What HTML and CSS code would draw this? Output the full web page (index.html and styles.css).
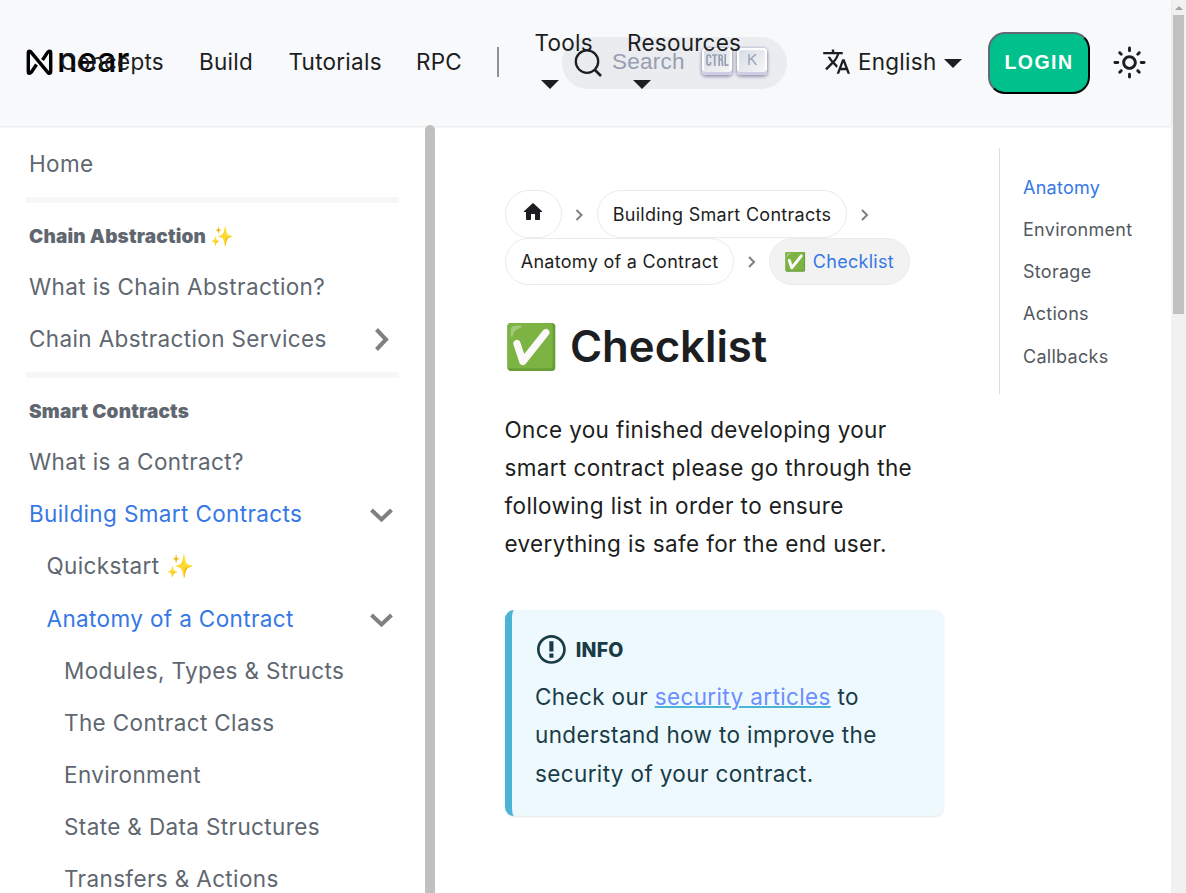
FILE: index.html
```html
<!DOCTYPE html>
<html lang="en">
<head>
<meta charset="utf-8">
<title>Checklist</title>
<link rel="stylesheet" href="styles.css">
</head>
<body>
<div class="page">
  <header class="navbar">
    <div class="logo">
      <svg width="27" height="27" viewBox="0 0 27 27"><path d="M10.500 15.500L5.300 23.200Q4.500 24.300 3.300 24.300Q2.300 24.300 2.300 23V4Q2.300 2.300 3.700 2.300Q4.500 2.300 5.200 3.300L21.800 23.400Q22.500 24.300 23.300 24.300Q24.700 24.300 24.700 22.600V4Q24.700 2.300 23.500 2.300Q22.400 2.300 21.600 3.400L16.500 11" fill="none" stroke="#000" stroke-width="3.400" stroke-linejoin="round"/></svg>
      <span class="logo-text">near</span>
    </div>
    <nav class="nav-left">
      <a class="n-concepts">Concepts</a><a class="n-build">Build</a><a class="n-tutorials">Tutorials</a><a class="n-rpc">RPC</a><i class="nav-sep"></i>
      <a class="drop n-tools">Tools<b class="caret"></b></a><a class="drop n-resources">Resources<b class="caret"></b></a>
    </nav>
    <div class="search">
      <svg class="search-icon" width="30" height="30" viewBox="0 0 30 30" fill="none" stroke="#1c1e21" stroke-width="2.300"><circle cx="13" cy="13.600" r="11.200"/><path d="M20.500 21.500l6.500 6.500" stroke-width="2.600"/></svg>
      <span class="search-label">Search</span>
      <kbd><svg width="23" height="12" viewBox="0 0 23 12" fill="none" stroke="#98a0b3" stroke-width="1.700"><path d="M4.600 4V3Q4.600 1 2.800 1T1 3v6q0 2 1.800 2t1.800-2V8M6 1h5.400M8.700 1v11M13.200 12V1h1.300q1.800 0 1.800 2.300t-1.800 2.400h-1.300M14.800 5.700q1.600 0 1.600 2.300v4M19.200 0v11.100H22.500"/></svg></kbd>
      <kbd><svg width="9" height="11" viewBox="0 0 9 11" fill="none" stroke="#98a0b3" stroke-width="1.400"><path d="M1 0v11M8 0L1 6.500M3.300 4.300L8.300 11"/></svg></kbd>
    </div>
    <div class="nav-right">
      <svg class="lang-icon" width="29.300" height="29.300" viewBox="0 0 24 24"><path fill="#1c1e21" d="M12.870 15.070l-2.540-2.510.030-.030c1.740-1.940 2.980-4.170 3.710-6.530H17V4h-7V2H8v2H1v1.990h11.170C11.500 7.920 10.440 9.750 9 11.350 8.070 10.320 7.300 9.190 6.690 8h-2c.730 1.630 1.730 3.170 2.980 4.560l-5.090 5.020L4 19l5-5 3.110 3.110.760-2.040zM18.500 10h-2L12 22h2l1.120-3h4.750L21 22h2l-4.500-12zm-2.620 7l1.620-4.330L19.120 17h-3.240z"/></svg>
      <span class="lang">English</span><b class="caret"></b>
      <button class="login">LOGIN</button>
      <svg class="sun" width="35" height="35" viewBox="0 0 24 24"><path fill="#1c1e21" d="M12,9c1.650,0,3,1.350,3,3s-1.350,3-3,3s-3-1.350-3-3S10.350,9,12,9 M12,7c-2.760,0-5,2.240-5,5s2.240,5,5,5s5-2.240,5-5 S14.760,7,12,7L12,7z M2,13l2,0c0.550,0,1-0.450,1-1s-0.450-1-1-1l-2,0c-0.550,0-1,0.450-1,1S1.450,13,2,13z M20,13l2,0c0.550,0,1-0.450,1-1 s-0.450-1-1-1l-2,0c-0.550,0-1,0.450-1,1S19.450,13,20,13z M11,2v2c0,0.550,0.450,1,1,1s1-0.450,1-1V2c0-0.550-0.450-1-1-1S11,1.450,11,2z M11,20v2c0,0.550,0.450,1,1,1s1-0.450,1-1v-2c0-0.550-0.450-1-1-1C11.450,19,11,19.450,11,20z M5.990,4.580c-0.390-0.390-1.030-0.390-1.410,0 c-0.390,0.390-0.390,1.030,0,1.410l1.060,1.060c0.390,0.390,1.030,0.390,1.410,0s0.390-1.030,0-1.410L5.990,4.580z M18.360,16.950 c-0.390-0.390-1.030-0.390-1.410,0c-0.390,0.390-0.390,1.030,0,1.410l1.060,1.060c0.390,0.390,1.030,0.390,1.410,0c0.390-0.390,0.390-1.030,0-1.410 L18.360,16.950z M19.420,5.990c0.390-0.390,0.390-1.030,0-1.410c-0.390-0.390-1.030-0.390-1.410,0l-1.060,1.060c-0.390,0.390-0.390,1.030,0,1.410 s1.030,0.390,1.410,0L19.420,5.990z M7.050,18.360c0.390-0.390,0.390-1.030,0-1.410c-0.390-0.390-1.030-0.390-1.410,0l-1.060,1.060 c-0.390,0.390-0.390,1.030,0,1.410s1.030,0.390,1.410,0L7.050,18.360z"/></svg>
    </div>
  </header>
  <div class="body">
    <aside class="sidebar">
      <a class="item">Home</a>
      <hr>
      <h4>Chain Abstraction ✨</h4>
      <a class="item">What is Chain Abstraction?</a>
      <a class="item">Chain Abstraction Services<svg class="chev" width="24" height="24" viewBox="0 0 24 24"><path d="M6.500 2.500L16 12.500L6.500 22.500" fill="none" stroke="#808080" stroke-width="4"/></svg></a>
      <hr>
      <h4>Smart Contracts</h4>
      <a class="item">What is a Contract?</a>
      <a class="item active">Building Smart Contracts<svg class="chev" width="24" height="24" viewBox="0 0 24 24"><path d="M1.500 8L11.500 17.500L21.500 8" fill="none" stroke="#808080" stroke-width="4"/></svg></a>
      <a class="item l2">Quickstart ✨</a>
      <a class="item l2 active">Anatomy of a Contract<svg class="chev" width="24" height="24" viewBox="0 0 24 24"><path d="M1.500 8L11.500 17.500L21.500 8" fill="none" stroke="#808080" stroke-width="4"/></svg></a>
      <a class="item l3">Modules, Types &amp; Structs</a>
      <a class="item l3">The Contract Class</a>
      <a class="item l3">Environment</a>
      <a class="item l3">State &amp; Data Structures</a>
      <a class="item l3">Transfers &amp; Actions</a>
    </aside>
    <div class="side-scroll"></div>
    <main class="content">
      <nav class="crumbs">
        <div class="crumb-row">
          <a class="crumb home"><svg width="24" height="24" viewBox="0 0 24 24"><path d="M10 19v-5h4v5c0 .550.450 1 1 1h3c.550 0 1-.450 1-1v-7h1.700c.460 0 .680-.570.330-.870L12.670 3.600c-.380-.340-.960-.340-1.340 0l-8.360 7.530c-.340.300-.130.870.330.870H5v7c0 .550.450 1 1 1h3c.550 0 1-.450 1-1z" fill="#1c1e21"/></svg></a>
          <svg class="sep" width="10" height="14" viewBox="0 0 10 14"><path d="M2.500 2l5 5-5 5" fill="none" stroke="#808080" stroke-width="2"/></svg>
          <a class="crumb c1">Building Smart Contracts</a>
          <svg class="sep" width="10" height="14" viewBox="0 0 10 14"><path d="M3 2l5 5-5 5" fill="none" stroke="#808080" stroke-width="2"/></svg>
        </div>
        <div class="crumb-row second">
          <a class="crumb c2">Anatomy of a Contract</a>
          <svg class="sep" width="10" height="14" viewBox="0 0 10 14"><path d="M3 2l5 5-5 5" fill="none" stroke="#808080" stroke-width="2"/></svg>
          <a class="crumb current">✅ Checklist</a>
        </div>
      </nav>
      <h1>✅ Checklist</h1>
      <p class="lead">Once you finished developing your<br>smart contract please go through the<br>following list in order to ensure<br>everything is safe for the end user.</p>
      <section class="info">
        <div class="info-head"><svg width="28.800" height="32.900" viewBox="0 0 14 16"><path fill="#193c47" fill-rule="evenodd" d="M7 2.300c3.140 0 5.700 2.560 5.700 5.700s-2.560 5.700-5.700 5.700A5.710 5.710 0 0 1 1.300 8c0-3.140 2.560-5.700 5.700-5.700zM7 1C3.140 1 0 4.140 0 8s3.140 7 7 7 7-3.140 7-7-3.140-7-7-7zm1 3H6v5h2V4zm0 6H6v2h2v-2z"/></svg><span class="info-title">INFO</span></div>
        <p>Check our <a>security articles</a> to<br>understand how to improve the<br>security of your contract.</p>
      </section>
    </main>
    <nav class="toc">
      <a class="active">Anatomy</a><a>Environment</a><a>Storage</a><a>Actions</a><a>Callbacks</a>
    </nav>
  </div>
</div>
<div class="scrollbar"><i class="arrow"></i><i class="thumb"></i></div>
</body>
</html>
```
FILE: styles.css
```css
* { box-sizing: border-box; }
body {
  margin: 0; display: flex; width: 1186px; height: 893px; overflow: hidden;
  background: #fff; color: #1c1e21;
  font: 380 22.500px/38.200px Inter, "Noto Color Emoji", sans-serif;
  letter-spacing: .37px;
}
.page { width: 1171px; height: 893px; display: flex; flex-direction: column; }
.navbar {
  position: relative; z-index: 1; flex: none; height: 126px; background: #f8f9fb; letter-spacing: .25px;
  box-shadow: 0 1px 2px rgba(0,0,0,.1); display: flex; align-items: center; justify-content: space-between;
}
.logo { position: absolute; left: 26px; top: 49px; display: flex; }
.logo-text { font: 540 34px/27px Inter, sans-serif; color: #000; margin: -3px 0 0 4px; letter-spacing: -.3px; }
.nav-left { position: relative; z-index: 2; display: flex; align-items: center; padding-left: 60px; height: 126px; margin-top: -2px; white-space: nowrap; }
.n-concepts { width: 139px; }
.n-build { width: 89.500px; }
.n-tutorials { width: 127.500px; }
.n-rpc { width: 81px; }
.nav-sep { width: 2px; height: 30px; background: #8f9093; margin-right: 35.500px; }
.drop { display: flex; flex-direction: column; margin-top: -11px; }
.n-tools { width: 92.500px; }
.caret { width: 0; height: 0; border: solid transparent; border-width: 9px 9px 0; border-top-color: #1c1e21; }
.drop .caret { margin: 17px 0 0 6px; }
.search {
  position: absolute; left: 562px; top: 37px; width: 225px; height: 52px; border-radius: 26px;
  background: #ebecf0; display: flex; align-items: center; padding-left: 12px;
}
.search-label { color: #969faf; font: 22.500px/30px "Liberation Sans", sans-serif; margin: -2px 17px 0 8px; width: 73px; }
kbd {
  width: 30px; height: 27px; margin: -4px 5px 0 0; border-radius: 4px; flex: none;
  display: flex; align-items: center; justify-content: center; padding-bottom: 3px;
  background: linear-gradient(-225deg, #d5dbe4, #f8f8f8);
  box-shadow: inset 0 -3px 0 0 #cdcde6, inset 0 0 1px 2px #fff, 0 1px 3px 1px rgba(30,35,90,.4);
}
.nav-right { display: flex; align-items: center; }
.lang-icon { margin: -2px 7px 0 0; }
.lang { width: 86px; margin-top: -2px; white-space: nowrap; }
.login {
  width: 102px; height: 62px; margin: 0 22px 0 26px; padding: 0 0 2px; border: 2px outset #1c1e21; border-radius: 17px;
  background: #00c08b; color: #fff; font: bold 19.500px "Liberation Sans", sans-serif; letter-spacing: 1.500px;
}
.sun { margin: -2px 24px 0 0; }
.body { display: flex; flex: 1; min-height: 0; }
.sidebar { width: 425px; padding: 12px 26px 0; color: #606770; overflow: hidden; }
.item { display: flex; align-items: center; justify-content: space-between; height: 52.100px; padding: 0 5px 0 3px; white-space: nowrap; }
.l2 { padding-left: 20.500px; }
.l3 { padding-left: 38px; }
.active { color: #3578e5; }
.sidebar hr { height: 6px; margin: 7px 0 8px; border: 0; background: #f7f7f8; }
.sidebar h4 { margin: 0; padding-left: 3px; height: 50px; font-size: 19px; line-height: 51px; font-weight: 900; letter-spacing: .2px; white-space: nowrap; }
.side-scroll { width: 10px; margin-top: -1px; position: relative; z-index: 2; background: #c0c0c0; border-radius: 5px 5px 0 0; }
.content { width: 509px; padding: 64px 0 0 70px; }
.crumb-row { display: flex; align-items: center; height: 47.500px; letter-spacing: .3px; }
.crumb { height: 47.500px; border: 1px solid #ebebeb; border-radius: 24px; font-size: 18px; line-height: 47.500px; padding-left: 14.700px; white-space: nowrap; }
.second .crumb { line-height: 46px; }
.home { width: 57px; display: flex; align-items: center; padding-bottom: 3px; }
.c1 { width: 250px; }
.c2 { width: 229px; }
.current { width: 141px; background: #f2f2f2; color: #3578e5; }
.sep { margin: 2px 13px 0 12px; }
h1 { margin: 28px 0 0 -.5px; font-size: 43.700px; line-height: 68px; font-weight: 600; letter-spacing: 0; white-space: nowrap; }
p { margin: 0; white-space: nowrap; }
.lead { margin: 30px 0 0 -.5px; line-height: 38.100px; }
.info {
  width: 439px; height: 206px; margin-top: 47px; padding: 22px 0 0 23px; color: #193c47; background: #eef9fd;
  border-left: 7px solid #4cb3d4; border-radius: 9px; box-shadow: 0 1px 2px rgba(0,0,0,.1);
}
.info-head { display: flex; align-items: center; gap: 10px; height: 34px; margin: 0 0 12px 2px; font-size: 19.500px; font-weight: 800; letter-spacing: .2px; }
.info-title { margin-top: 2px; }
.info p { line-height: 38.100px; }
.info a { color: #6c8eff; text-decoration: underline; text-decoration-color: #4cb3d4; text-decoration-thickness: 2px; }
.toc { width: 140px; height: 246px; margin: 22px 0 0 55px; padding: 19px 0 0 23px; border-left: 1px solid #dadde1; display: flex; flex-direction: column; font-size: 18px; letter-spacing: .28px; color: #525860; }
.toc a { height: 42.150px; line-height: 42px; }
.scrollbar { width: 15px; height: 893px; background: #f1f1f1; display: flex; flex-direction: column; align-items: center; }
.arrow { width: 0; height: 0; margin: 6px 0 5px; border: solid transparent; border-width: 0 4px 4px; border-bottom-color: #a3a3a3; }
.thumb { width: 11px; height: 299px; background: #c0c0c0; }
```
